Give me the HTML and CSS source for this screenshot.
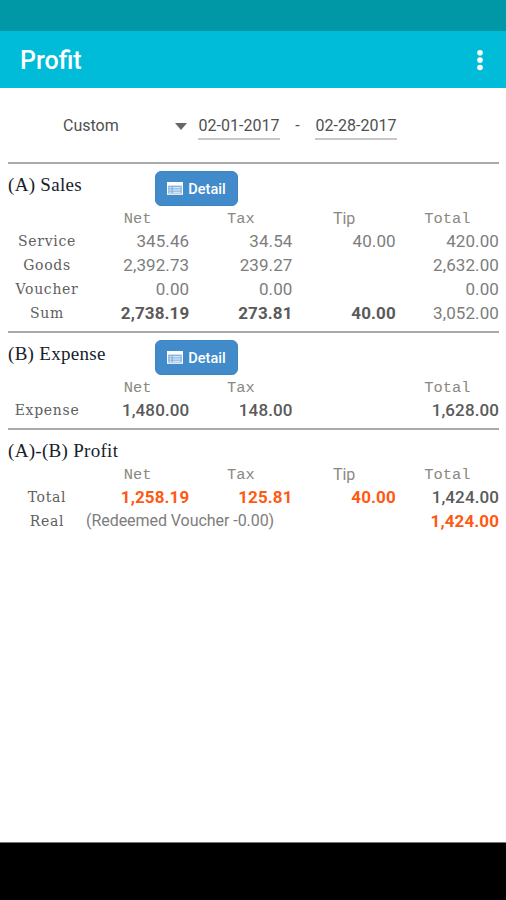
FILE: index.html
```html
<!DOCTYPE html>
<html lang="en">
<head>
<meta charset="utf-8">
<title>Profit</title>
<link rel="stylesheet" href="styles.css">
</head>
<body>
<svg width="0" height="0" class="defs">
  <symbol id="list-icon" viewBox="0 0 16 14">
    <rect x="0.6" y="0.6" width="14.8" height="11.6" fill="#86b4e0" stroke="#fff" stroke-width="1.2"/>
    <rect x="0.6" y="0.6" width="14.8" height="3" fill="#fff"/>
    <path d="M2.5 5.8h2M2.5 8h2M2.5 10.2h2M6 5.8h7.5M6 8h7.5M6 10.2h7.5" stroke="#eef5fc" stroke-width="1.1"/>
  </symbol>
</svg>
<div class="status"></div>
<header class="bar">
  <h1>Profit</h1>
  <svg class="more" width="6" height="22" viewBox="0 0 6 22"><circle cx="3" cy="2.8" r="2.8"/><circle cx="3" cy="10.1" r="2.8"/><circle cx="3" cy="17.5" r="2.8"/></svg>
</header>
<main>
  <div class="filter">
    <div class="select"><span>Custom</span><svg width="12" height="7" viewBox="0 0 12 7"><path d="M0 0h12L6 7z"/></svg></div>
    <span class="date">02-01-2017</span>
    <span class="dash">-</span>
    <span class="date">02-28-2017</span>
  </div>
  <section>
    <div class="title"><h2>(A) Sales</h2><button><svg width="16" height="14"><use href="#list-icon"/></svg><span>Detail</span></button></div>
    <div class="row head"><i></i><span>Net</span><span>Tax</span><span class="tip">Tip</span><span>Total</span></div>
    <div class="row"><span class="label">Service</span><span>345.46</span><span>34.54</span><span>40.00</span><span>420.00</span></div>
    <div class="row"><span class="label">Goods</span><span>2,392.73</span><span>239.27</span><span></span><span>2,632.00</span></div>
    <div class="row"><span class="label">Voucher</span><span>0.00</span><span>0.00</span><span></span><span>0.00</span></div>
    <div class="row"><span class="label">Sum</span><b>2,738.19</b><b>273.81</b><b>40.00</b><span>3,052.00</span></div>
  </section>
  <section>
    <div class="title"><h2>(B) Expense</h2><button><svg width="16" height="14"><use href="#list-icon"/></svg><span>Detail</span></button></div>
    <div class="row head"><i></i><span>Net</span><span>Tax</span><span></span><span>Total</span></div>
    <div class="row"><span class="label">Expense</span><b class="medium">1,480.00</b><b class="medium">148.00</b><span></span><b class="medium">1,628.00</b></div>
  </section>
  <section class="profit">
    <div class="title"><h2>(A)-(B) Profit</h2></div>
    <div class="row head"><i></i><span>Net</span><span>Tax</span><span class="tip">Tip</span><span>Total</span></div>
    <div class="row"><span class="label">Total</span><b class="hot">1,258.19</b><b class="hot">125.81</b><b class="hot">40.00</b><b class="medium">1,424.00</b></div>
    <div class="row"><span class="label">Real</span><span class="note">(Redeemed Voucher -0.00)</span><b class="hot">1,424.00</b></div>
  </section>
</main>
<footer></footer>
</body>
</html>
```
FILE: styles.css
```css
* { box-sizing: border-box; }
body {
  margin: 0;
  height: 900px;
  display: flex;
  flex-direction: column;
  overflow: hidden;
  background: #fff;
  font-family: Roboto, sans-serif;
}
.defs { position: absolute; }
.status { height: 31px; background: #0097a7; }
.bar {
  height: 57px;
  padding: 2px 23px 0 20px;
  display: flex;
  align-items: center;
  justify-content: space-between;
  background: #00bcd9;
  color: #fff;
}
h1 { margin: 0; font-size: 25px; font-weight: 500; line-height: 30px; }
.more { fill: #fff; }
main { flex: 1; padding: 0 7px 0 8px; }
.filter {
  height: 74px;
  padding: 24px 0 0 55px;
  display: flex;
  align-items: flex-start;
  font-size: 16px;
  line-height: 28px;
  color: #505050;
}
.select {
  width: 124px;
  margin-right: 11px;
  display: flex;
  align-items: center;
  justify-content: space-between;
}
.select svg { fill: #666; }
.date {
  width: 82px;
  height: 28px;
  text-align: center;
  border-bottom: 2px solid #c8c8c8;
}
.dash { width: 35px; text-align: center; }
section { padding-bottom: 6px; border-top: 2px solid #a9a9a9; }
.title { height: 43px; display: flex; align-items: flex-start; }
h2 {
  width: 147px;
  margin: 8px 0 0;
  font-family: "Liberation Serif", serif;
  font-size: 19px;
  font-weight: 400;
  line-height: 26px;
  letter-spacing: 0.3px;
  color: #17212b;
  white-space: nowrap;
}
button {
  width: 83px;
  height: 35px;
  margin: 7px 0 0;
  padding: 0;
  display: flex;
  align-items: center;
  justify-content: center;
  gap: 5px;
  border: 1px solid #3c86c6;
  border-radius: 6px;
  background: #428bca;
  color: #fff;
  font: 500 14.5px/20px Roboto, sans-serif;
}
button span { padding-top: 3px; }
.row {
  height: 24px;
  display: grid;
  grid-template-columns: 78px repeat(4, 1fr);
  align-items: center;
  font-size: 17px;
  line-height: 24px;
  color: #7d7d7d;
  text-align: right;
  letter-spacing: 0.1px;
}
.head {
  height: 22px;
  font-family: "Liberation Mono", monospace;
  font-size: 15.4px;
  line-height: 22px;
  text-align: center;
  letter-spacing: 0;
  color: #8b8880;
}
.head span { padding-top: 1px; }
.head .tip { padding-top: 0; font-family: Roboto, sans-serif; font-size: 16px; }
.label {
  font-family: "DejaVu Serif", serif;
  font-size: 14px;
  text-align: center;
  letter-spacing: 0.7px;
  color: #606060;
}
b { font-weight: 700; color: #5a5a5a; }
.medium { font-weight: 500; }
.hot { color: #ff5a14; }
.note {
  grid-column: 2 / 5;
  text-align: left;
  font-size: 16px;
  letter-spacing: -0.05px;
  white-space: nowrap;
}
.profit .title { height: 33px; }
footer { height: 58px; background: #000; border-top: 1px solid #777; }
```
